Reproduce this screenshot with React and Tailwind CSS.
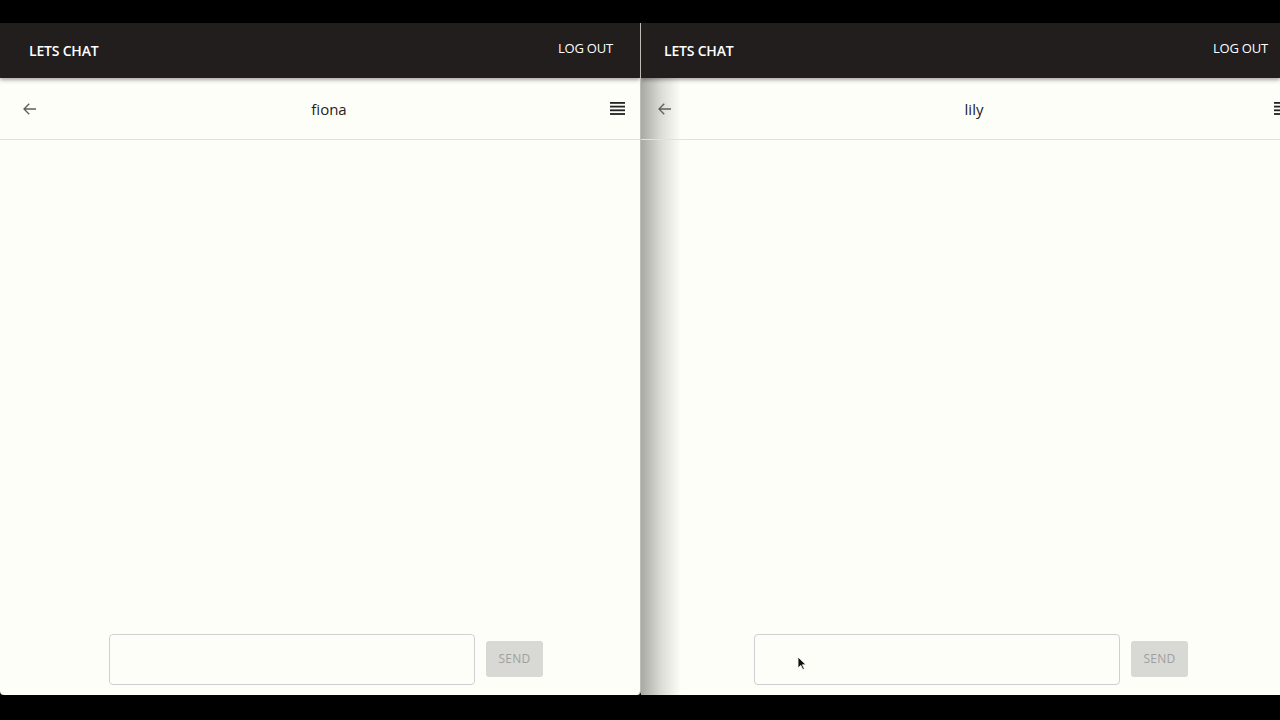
import React from "react";

function Arrow() {
  return (
    <svg width="18" height="18" viewBox="0 0 24 24" fill="none" stroke="#5f5f5f" strokeWidth="1.8">
      <path d="M20 12H4.5M11 5l-7 7 7 7" />
    </svg>
  );
}

function Menu() {
  return (
    <svg width="15" height="13" viewBox="0 0 15 13" fill="#222">
      <rect x="0" y="0" width="15" height="1.8" />
      <rect x="0" y="3.7" width="15" height="1.8" />
      <rect x="0" y="7.4" width="15" height="1.8" />
      <rect x="0" y="11.1" width="15" height="1.8" />
    </svg>
  );
}

function Panel({ name, brandPad, logoutPad, titleShift, inputLeft, cursor, menuRight, arrowLeft, shade }) {
  return (
    <div className="relative flex flex-col h-full w-full bg-[#fefef8]" style={{ fontFamily: "'Open Sans', sans-serif" }}>
      {shade && (
        <div className="absolute left-0 top-[55px] bottom-0 w-[40px] bg-gradient-to-r from-[#a9a9a4] via-[#dcdcd6] to-transparent pointer-events-none" />
      )}
      <div className="h-[55px] bg-[#211e1d] flex items-start justify-between text-white shadow-[0_2px_4px_rgba(0,0,0,0.35)] z-10 shrink-0">
        <div className="text-[14px] font-semibold mt-[17px] tracking-[-0.2px]" style={{ paddingLeft: brandPad }}>LETS CHAT</div>
        <div className="text-[13px] mt-[16px] tracking-[-0.2px]" style={{ paddingRight: logoutPad }}>LOG OUT</div>
      </div>
      <div className="h-[62px] border-b border-[#e2e2dc] flex items-center relative shrink-0">
        <div className="absolute top-[22px]" style={{ left: arrowLeft }}><Arrow /></div>
        <div className="absolute top-[20px] text-[15px] text-[#222]" style={{ left: titleShift, transform: "translateX(-50%)" }}>{name}</div>
        <div className="absolute top-[24px]" style={{ right: menuRight }}><Menu /></div>
      </div>
      <div className="flex-1" />
      <div className="h-[61px] flex items-start shrink-0 relative" style={{ paddingLeft: inputLeft }}>
        <div className="relative w-[366px] h-[51px] border border-[#cfcfd4] rounded-[4px]">
          {cursor && (
            <svg className="absolute left-[42px] top-[21px]" width="10" height="15" viewBox="0 0 10 15">
              <path d="M1 1v11l2.8-2.6 2 4.2 1.6-.8-2-4H9z" fill="#111" stroke="#fff" strokeWidth="0.8" />
            </svg>
          )}
        </div>
        <div className="ml-[11px] mt-[7px] w-[57px] h-[36px] rounded-[3px] bg-[#d8d8d4] text-[#a0a0a0] text-[12px] flex items-center justify-center tracking-[0.3px]">SEND</div>
      </div>
    </div>
  );
}

export default function App() {
  return (
    <div className="w-[1280px] h-[720px] bg-black overflow-hidden flex flex-col">
      <div className="h-[23px] shrink-0" />
      <div className="h-[672px] flex">
        <div className="w-[641px] h-full rounded-b-[4px] overflow-hidden relative z-10 border-r border-[#bdbdb5]">
          <Panel name="fiona" brandPad="29px" logoutPad="27px" titleShift="329px" inputLeft="109px" menuRight="15px" arrowLeft="21px" />
        </div>
        <div className="w-[639px] h-full relative overflow-hidden">
          <Panel name="lily" brandPad="23px" logoutPad="12px" titleShift="333px" inputLeft="113px" cursor menuRight="-9px" arrowLeft="15px" shade />
        </div>
      </div>
    </div>
  );
}
